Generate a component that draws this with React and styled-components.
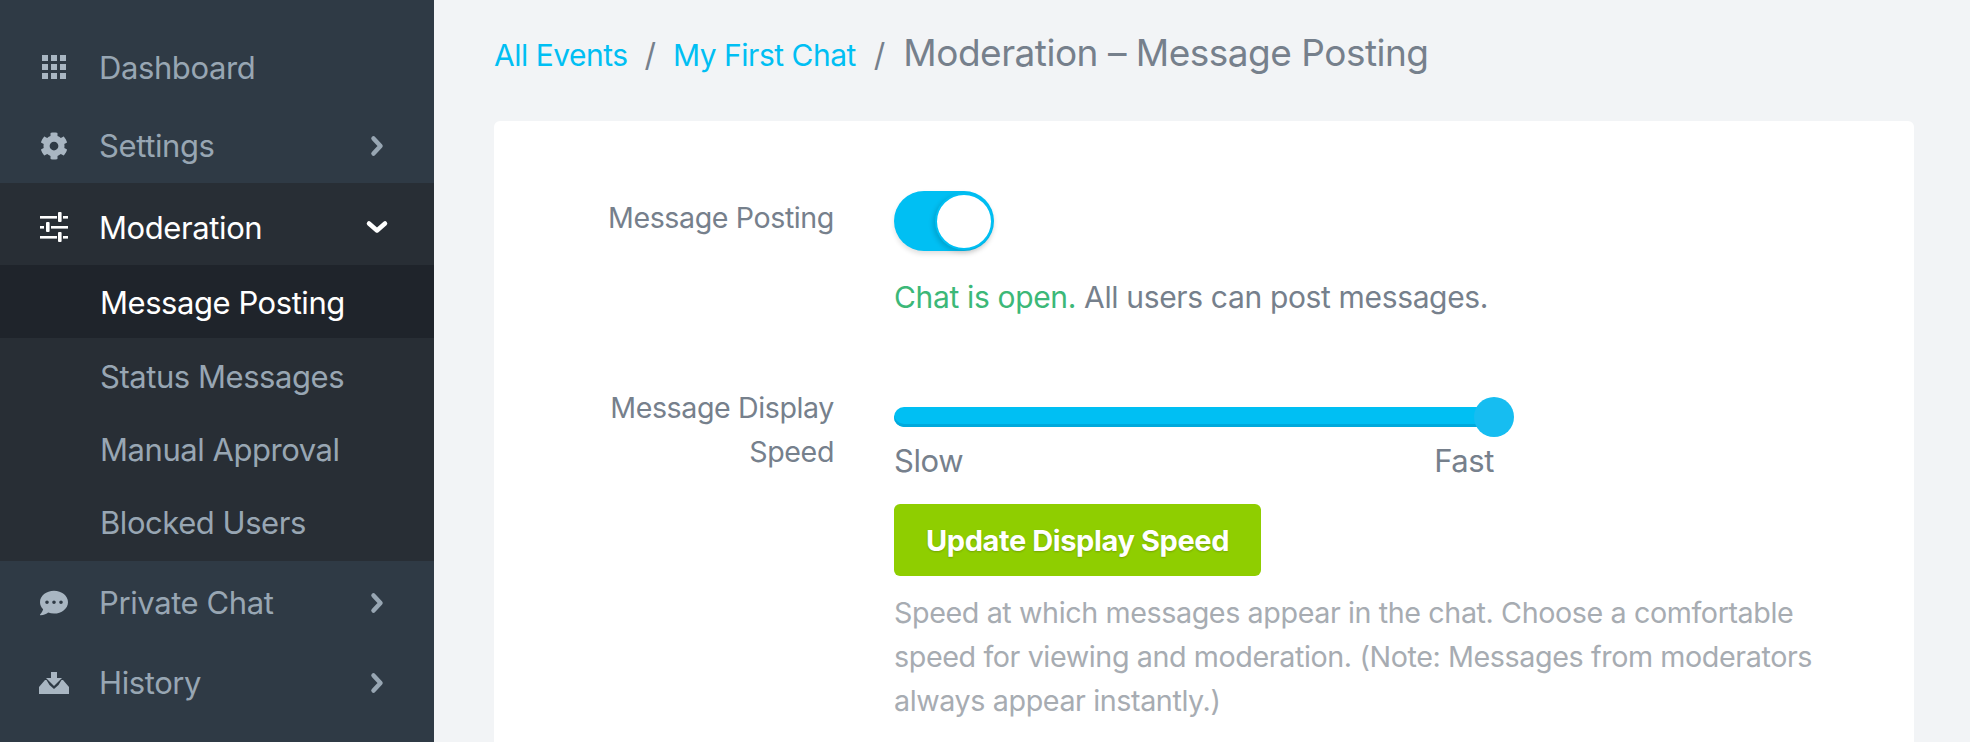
import React from 'react';
import styled, { createGlobalStyle } from 'styled-components';
import { FaCog, FaCommentDots } from 'react-icons/fa';

const GlobalStyle = createGlobalStyle`
    html, body {
        margin: 0;
        padding: 0;
        background: #f2f4f6;
    }
    * {
        box-sizing: border-box;
    }
    body {
        font-family: "Inter", "Liberation Sans", sans-serif;
    }
`;

const Page = styled.div`
    display: flex;
    height: 742px;
    overflow: hidden;
`;

const Sidebar = styled.nav`
    width: 434px;
    flex-shrink: 0;
    background: #2f3a45;
    padding-top: 28px;
`;

const NavRow = styled.div`
    display: flex;
    align-items: center;
    height: ${props => props.h}px;
    padding: ${props => props.pt || 0}px 45px 0 38px;
    color: ${props => props.open ? "#ffffff" : "#98a6b3"};
    background: ${props => props.open ? "#282e35" : "transparent"};
`;

const IconBox = styled.div`
    width: 32px;
    display: flex;
    justify-content: center;
    margin-right: 29px;
    color: ${props => props.open ? "#ffffff" : "#a9b6c2"};
`;

const NavLabel = styled.span`
    flex-grow: 1;
    font-size: 31px;
    letter-spacing: -0.4px;
`;

const SubMenu = styled.div`
    background: #282e35;
    padding-bottom: 2px;
`;

const SubList = styled.div`
    padding-top: 2px;
`;

const SubItem = styled.div`
    display: flex;
    align-items: center;
    height: 73px;
    padding-left: 100px;
    padding-top: ${props => props.active ? "2px" : "0"};
    font-size: 31px;
    letter-spacing: -0.45px;
    color: ${props => props.active ? "#ffffff" : "#98a6b3"};
    background: ${props => props.active ? "#1f242b" : "transparent"};
`;

const Main = styled.main`
    flex-grow: 1;
    padding: 0 56px 0 60px;
`;

const Breadcrumb = styled.div`
    display: flex;
    align-items: center;
    height: 121px;
    padding-bottom: 12px;
    color: #76808c;
`;

const Crumb = styled.a`
    font-size: 30px;
    letter-spacing: -0.5px;
    color: #00bff3;
`;

const Slash = styled.span`
    font-size: 32px;
    margin: 0 ${props => props.wide ? "18px" : "17px"};
`;

const Title = styled.h1`
    margin: 0 0 5px;
    font-size: 37px;
    font-weight: 400;
    letter-spacing: -0.5px;
    color: #76808c;
`;

const Card = styled.section`
    background: #ffffff;
    border-radius: 6px;
    padding: 70px 0 0;
    height: 700px;
`;

const FormRow = styled.div`
    display: grid;
    grid-template-columns: 340px 1fr;
    column-gap: 60px;
    margin-bottom: ${props => props.gap || 0};
`;

const FieldLabel = styled.div`
    text-align: right;
    padding-top: ${props => props.offset || 0};
    font-size: 28.6px;
    line-height: 44px;
    letter-spacing: -0.4px;
    color: #76808c;
`;

const Toggle = styled.div`
    display: flex;
    justify-content: flex-end;
    width: 100px;
    height: 60px;
    padding: 2px 1px 1px;
    border-radius: 30px;
    background: #00bff3;
    box-shadow: 0 3px 5px rgba(0, 0, 0, 0.12);
`;

const Knob = styled.div`
    width: 58px;
    height: 57px;
    border-radius: 50%;
    background: #ffffff;
    border: 2px solid #00bff3;
    box-shadow: -2px 2px 5px rgba(0, 0, 0, 0.15);
`;

const StatusLine = styled.p`
    margin: 24px 0 0;
    font-size: 30px;
    line-height: 44px;
    letter-spacing: -0.35px;
    color: #76808c;
`;

const OpenText = styled.span`
    color: #3cb878;
`;

const Field = styled.div`
    width: 600px;
`;

const Track = styled.div`
    position: relative;
    width: 600px;
    height: 20px;
    margin-top: 21px;
    border-radius: 10px;
    background: #00bff3;
    box-shadow: inset 0 -3px 0 #00a9dc;
`;

const Thumb = styled.div`
    position: absolute;
    right: -20px;
    top: -10px;
    width: 40px;
    height: 40px;
    border-radius: 50%;
    background: #16bdf1;
`;

const ScaleLabels = styled.div`
    display: flex;
    justify-content: space-between;
    font-size: 31px;
    line-height: 44px;
    letter-spacing: -0.4px;
    color: #76808c;
    margin-top: 12px;
`;

const SaveButton = styled.button`
    display: block;
    width: 367px;
    height: 72px;
    margin-top: 21px;
    border: none;
    border-radius: 6px;
    background: #8fce00;
    color: #ffffff;
    font-family: inherit;
    font-size: 29px;
    font-weight: 700;
    letter-spacing: -0.4px;
    text-shadow: 0 1px 2px rgba(0, 0, 0, 0.2);
`;

const HelpText = styled.p`
    width: 950px;
    margin: 15px 0 0;
    font-size: 28.7px;
    line-height: 44px;
    letter-spacing: -0.4px;
    color: #a7acb2;
`;

const Chevron = ({ down }) => (
    <svg width="24" height="24" viewBox="0 0 24 24" fill="none" stroke="currentColor" strokeWidth="4.5" strokeLinecap="round" strokeLinejoin="round">
        {down ? <path d="M4 8.5 L12 15.5 L20 8.5" /> : <path d="M8.5 4.5 L15.5 12 L8.5 19.5" />}
    </svg>
);

const GridIcon = () => (
    <svg width="24" height="24" viewBox="0 0 24 24" fill="currentColor">
        {[0, 9, 18].map(y => [0, 9, 18].map(x => (
            <rect key={`${x}-${y}`} x={x} y={y} width="6" height="6" />
        )))}
    </svg>
);

const SlidersIcon = () => (
    <svg width="28" height="30" viewBox="0 0 28 30" fill="currentColor">
        <rect x="0" y="4" width="17" height="2.6" />
        <rect x="23" y="4" width="5" height="2.6" />
        <rect x="18" y="0" width="3.6" height="10" rx="1" />
        <rect x="0" y="14" width="4" height="2.6" />
        <rect x="11" y="14" width="17" height="2.6" />
        <rect x="6" y="10" width="3.6" height="10" rx="1" />
        <rect x="0" y="24" width="17" height="2.6" />
        <rect x="23" y="24" width="5" height="2.6" />
        <rect x="18" y="20" width="3.6" height="10" rx="1" />
    </svg>
);

const InboxDownIcon = () => (
    <svg width="30" height="22" viewBox="0 0 30 22" fill="currentColor">
        <path d="M12 0 H18 V6 H23 L15 14 L7 6 H12 Z" />
        <path d="M6 8 H7.5 L10.5 13 L15 17 L19.5 13 L22.5 8 H24 L30 15 V22 H0 V15 Z" />
    </svg>
);

export default function App() {
    return (
        <Page>
            <GlobalStyle />
            <Sidebar>
                <NavRow h={78}>
                    <IconBox><GridIcon /></IconBox>
                    <NavLabel>Dashboard</NavLabel>
                </NavRow>
                <NavRow h={77} pt={2}>
                    <IconBox><FaCog size={28} /></IconBox>
                    <NavLabel>Settings</NavLabel>
                    <Chevron />
                </NavRow>
                <NavRow open h={82} pt={6}>
                    <IconBox open><SlidersIcon /></IconBox>
                    <NavLabel>Moderation</NavLabel>
                    <Chevron down />
                </NavRow>
                <SubMenu>
                    <SubItem active>Message Posting</SubItem>
                    <SubList>
                        <SubItem>Status Messages</SubItem>
                        <SubItem>Manual Approval</SubItem>
                        <SubItem>Blocked Users</SubItem>
                    </SubList>
                </SubMenu>
                <NavRow h={81} pt={2}>
                    <IconBox><FaCommentDots size={28} /></IconBox>
                    <NavLabel>Private Chat</NavLabel>
                    <Chevron />
                </NavRow>
                <NavRow h={79} pt={2}>
                    <IconBox><InboxDownIcon /></IconBox>
                    <NavLabel>History</NavLabel>
                    <Chevron />
                </NavRow>
            </Sidebar>
            <Main>
                <Breadcrumb>
                    <Crumb>All Events</Crumb>
                    <Slash>/</Slash>
                    <Crumb>My First Chat</Crumb>
                    <Slash wide>/</Slash>
                    <Title>Moderation – Message Posting</Title>
                </Breadcrumb>
                <Card>
                    <FormRow gap="67px">
                        <FieldLabel offset="5px">Message Posting</FieldLabel>
                        <div>
                            <Toggle><Knob /></Toggle>
                            <StatusLine><OpenText>Chat is open.</OpenText> All users can post messages.</StatusLine>
                        </div>
                    </FormRow>
                    <FormRow>
                        <FieldLabel>Message Display<br />Speed</FieldLabel>
                        <div>
                            <Field>
                                <Track><Thumb /></Track>
                                <ScaleLabels><span>Slow</span><span>Fast</span></ScaleLabels>
                            </Field>
                            <SaveButton>Update Display Speed</SaveButton>
                            <HelpText>Speed at which messages appear in the chat. Choose a comfortable speed for viewing and moderation. (Note: Messages from moderators always appear instantly.)</HelpText>
                        </div>
                    </FormRow>
                </Card>
            </Main>
        </Page>
    );
}
